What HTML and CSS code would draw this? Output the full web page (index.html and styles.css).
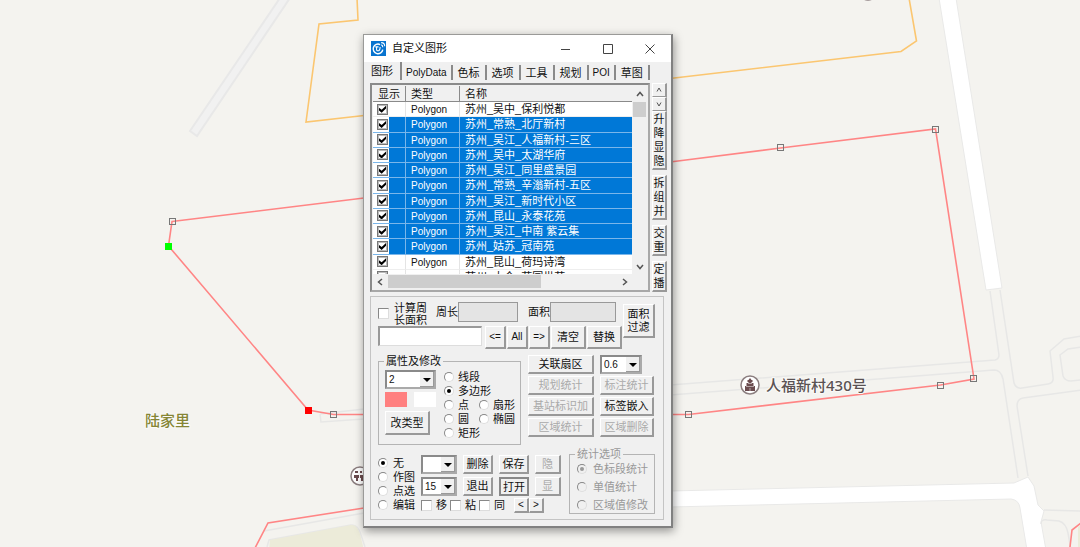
FILE: index.html
```html
<!DOCTYPE html>
<html lang="zh-CN">
<head>
<meta charset="utf-8">
<title>自定义图形</title>
<link rel="stylesheet" href="styles.css">
</head>
<body>
<main class="desktop">
  <svg class="map" viewBox="0 0 1080 547" preserveAspectRatio="xMidYMid slice" role="img" aria-label="地图">
    <path class="path-road" d="M282 -5 L190 131 L197 136 L292 -5"/>
    <path class="road" d="M939 -2 L986 290 L1002 288 L956 -2 Z"/>
    <path class="lane" d="M990 291 L999 355 Q999 359 995 360 L670 385 M670 395 L994 370 Q1001 370 1003 379 L1018 478"/>
    <path class="lane" d="M1000 290 L1014 383 Q1016 389 1022 388 L1048 384 Q1054 383 1053 377 L1050 351 L1064 339 L1081 336 M1081 347 L1068 349 L1060 355 L1063 376 Q1065 381 1071 381 L1081 380 M1081 390 L1023 398 Q1017 399 1017 406 L1028 476"/>
    <path class="lane" d="M320 414 L364 409 M320 414 L321 422 L364 419"/>
    <path class="road" d="M670 491 L1014 483 L1028 477 L1034 486 L1038 505 L1044 511 L1041 522 L1046 550 L1027 550 L1020 508 Q1019 500 1011 499 L670 507 Z"/>
    <path class="lane" d="M1044 510 L1081 511 M1041 524 Q1041 519 1047 520 L1059 521 Q1066 523 1068 533 L1071 550"/>
    <path class="lane" d="M264 531 L364 513 M267 547 L269 540 L351 525 Q358 524 361 535 L365 547"/>
    <path class="park" d="M269 550 L270 540 L351 525 Q357 524 360 534 L364 550 Z M1081 525 L1078 527 L1078 550 L1081 550 Z"/>
    <path class="zone-orange" d="M357 -2 L358 20 L319 24 L306 122 L364 115.5 M670 78.500 L901 51.500 L916.500 41 L909 -2"/>
    <path class="zone-red" d="M172 221.500 L364 198 L670 162 L780.500 148 L935.500 129 L974 379 L940.500 385 L688.500 414.500 L333.500 414.500 L308 410 L168.500 246 Z"/>
    <path class="zone-red" d="M254 550 L268 523 L364 508 M1081 523 L1072 530 L1070 547"/>
    <g class="node">
      <rect x="169.500" y="218.500" width="6" height="6"/>
      <rect x="330.500" y="411.500" width="6" height="6"/>
      <rect x="777.500" y="144.500" width="6" height="6"/>
      <rect x="932.500" y="126.500" width="6" height="6"/>
      <rect x="970.500" y="375.500" width="6" height="6"/>
      <rect x="937.500" y="382.500" width="6" height="6"/>
      <rect x="685.500" y="411.500" width="6" height="6"/>
    </g>
    <rect class="node-end" x="165" y="243" width="7" height="7"/>
    <rect class="node-start" x="305" y="407" width="7" height="7"/>
    <circle class="pin-disc" cx="868" cy="-9" r="9"/>
    <g>
      <circle class="pin-disc" cx="750" cy="385" r="9"/>
      <path class="pin-glyph" d="M750 378 l1.500 2 h1 v2 h-1 v1 h2 v3 h1.500 v5 h-10 v-5 h1.500 v-3 h2 v-1 h-1 v-2 h1z"/>
      <path class="pin-cut" d="M746 386.500 h8 M748 383.500 h4 M750 388 v3"/>
    </g>
    <g>
      <circle class="pin-disc" cx="360" cy="476" r="9"/>
      <path class="pin-glyph" d="M355 471h3v2h-3z M360 471h2v2h-2z M354 475h5v3h-1v3h-2v-3h-2z M360 475h4v6h-3v-3h-1z"/>
    </g>
    <text class="village" x="145" y="426">陆家里</text>
    <text class="address" x="766" y="391">人福新村430号</text>
  </svg>

  <section class="window" aria-label="自定义图形">
    <header class="titlebar">
      <svg class="app-icon" viewBox="0 0 14 14" aria-hidden="true">
        <rect width="14" height="14" fill="#0874cf"/>
        <path d="M8.500 3.300 A4.500 4.500 0 1 0 11 8" fill="none" stroke="#fff" stroke-width="1.300"/>
        <path d="M4 5.500 H7 M5.200 5.500 V8 Q5.500 9.600 7.200 9 Q8.500 8.500 8.500 5.500 M9.500 3.500 Q11 4 11 5.800 M9.500 1.500 Q12.800 1.500 12.800 5" fill="none" stroke="#fff" stroke-width="1"/>
      </svg>
      <h1>自定义图形</h1>
      <div class="window-buttons">
        <button type="button" aria-label="最小化"><svg viewBox="0 0 10 10"><path d="M0 5.500H9"/></svg></button>
        <button type="button" aria-label="最大化"><svg viewBox="0 0 10 10"><path d="M.5 .5H9.500V9.500H.5Z"/></svg></button>
        <button type="button" aria-label="关闭"><svg viewBox="0 0 10 10"><path d="M.5 .5L9.500 9.500M9.500 .5L.5 9.500"/></svg></button>
      </div>
    </header>

    <nav class="tabs">
      <button type="button" class="active">图形</button><button type="button" class="latin">PolyData</button><button type="button">色标</button><button type="button">选项</button><button type="button">工具</button><button type="button">规划</button><button type="button" class="latin">POI</button><button type="button">草图</button>
    </nav>

    <div class="list-area">
      <div class="listbox">
        <div class="viewport">
          <table>
            <thead><tr><th class="c-show">显示</th><th class="c-type">类型</th><th>名称</th></tr></thead>
            <tbody>
              <tr><td><input type="checkbox" checked aria-label="显示 保利悦都"></td><td>Polygon</td><td>苏州_吴中_保利悦都</td></tr>
              <tr class="sel"><td><input type="checkbox" checked aria-label="显示 北厅新村"></td><td>Polygon</td><td>苏州_常熟_北厅新村</td></tr>
              <tr class="sel"><td><input type="checkbox" checked aria-label="显示 人福新村"></td><td>Polygon</td><td>苏州_吴江_人福新村-三区</td></tr>
              <tr class="sel"><td><input type="checkbox" checked aria-label="显示 太湖华府"></td><td>Polygon</td><td>苏州_吴中_太湖华府</td></tr>
              <tr class="sel"><td><input type="checkbox" checked aria-label="显示 同里盛景园"></td><td>Polygon</td><td>苏州_吴江_同里盛景园</td></tr>
              <tr class="sel"><td><input type="checkbox" checked aria-label="显示 辛滃新村"></td><td>Polygon</td><td>苏州_常熟_辛滃新村-五区</td></tr>
              <tr class="sel"><td><input type="checkbox" checked aria-label="显示 新时代小区"></td><td>Polygon</td><td>苏州_吴江_新时代小区</td></tr>
              <tr class="sel"><td><input type="checkbox" checked aria-label="显示 永泰花苑"></td><td>Polygon</td><td>苏州_昆山_永泰花苑</td></tr>
              <tr class="sel"><td><input type="checkbox" checked aria-label="显示 中南 紫云集"></td><td>Polygon</td><td>苏州_吴江_中南 紫云集</td></tr>
              <tr class="sel"><td><input type="checkbox" checked aria-label="显示 冠南苑"></td><td>Polygon</td><td>苏州_姑苏_冠南苑</td></tr>
              <tr><td><input type="checkbox" checked aria-label="显示 荷玛诗湾"></td><td>Polygon</td><td>苏州_昆山_荷玛诗湾</td></tr>
              <tr><td><input type="checkbox" checked aria-label="显示 花园世苑"></td><td></td><td>苏州_太仓_花园世苑</td></tr>
            </tbody>
          </table>
        </div>
        <div class="vscroll">
          <svg viewBox="0 0 8 6"><path d="M1 5L4 1.500L7 5"/></svg>
          <span class="thumb"></span>
          <svg viewBox="0 0 8 6"><path d="M1 1L4 4.500L7 1"/></svg>
        </div>
        <div class="hscroll">
          <svg viewBox="0 0 6 8"><path d="M5 1L1.500 4L5 7"/></svg>
          <span class="thumb"></span>
          <svg viewBox="0 0 6 8"><path d="M1 1L4.500 4L1 7"/></svg>
        </div>
      </div>
      <div class="side">
        <button type="button" class="step" aria-label="上移"><svg viewBox="0 0 6 6"><path d="M1 4.500L3 1L5 4.500"/></svg></button>
        <button type="button" class="step" aria-label="下移"><svg viewBox="0 0 6 6"><path d="M1 1.500L3 5L5 1.500"/></svg></button>
        <div class="group first"><button type="button">升</button><button type="button">降</button><button type="button">显</button><button type="button">隐</button></div>
        <div class="group"><button type="button">拆</button><button type="button">组</button><button type="button">并</button></div>
        <div class="group"><button type="button">交</button><button type="button">重</button></div>
        <div class="group"><button type="button">定</button><button type="button">播</button></div>
      </div>
    </div>

    <div class="panel">
      <div class="measure">
        <div class="measure-rows">
          <div class="measure-row">
            <label class="calc"><input type="checkbox"><span>计算周<br>长面积</span></label>
            <label class="field">周长<input type="text" class="readonly" readonly></label>
            <label class="field area">面积<input type="text" class="readonly" readonly></label>
          </div>
          <div class="search-row">
            <input type="text" class="search" aria-label="名称">
            <button type="button" class="btn latin">&lt;=</button>
            <button type="button" class="btn latin">All</button>
            <button type="button" class="btn latin">=&gt;</button>
            <button type="button" class="btn wide">清空</button>
            <button type="button" class="btn wide">替换</button>
          </div>
        </div>
        <button type="button" class="btn filter">面积<br>过滤</button>
      </div>

      <div class="middle">
        <fieldset class="props">
          <legend>属性及修改</legend>
          <div class="props-left">
            <span class="combo"><select aria-label="线宽"><option>2</option></select></span>
            <div class="swatches">
              <button type="button" class="swatch line" aria-label="线条颜色"></button>
              <button type="button" class="swatch fill" aria-label="填充颜色"></button>
            </div>
            <button type="button" class="btn retype">改类型</button>
          </div>
          <div class="shapes">
            <label class="full"><input type="radio" name="shape">线段</label>
            <label class="full"><input type="radio" name="shape" checked>多边形</label>
            <label><input type="radio" name="shape">点</label>
            <label><input type="radio" name="shape">扇形</label>
            <label><input type="radio" name="shape">圆</label>
            <label><input type="radio" name="shape">椭圆</label>
            <label class="full"><input type="radio" name="shape">矩形</label>
          </div>
        </fieldset>
        <div class="actions">
          <button type="button" class="btn">关联扇区</button>
          <span class="combo ratio"><select aria-label="透明度"><option>0.6</option></select></span>
          <button type="button" class="btn" disabled>规划统计</button>
          <button type="button" class="btn" disabled>标注统计</button>
          <button type="button" class="btn" disabled>基站标识加</button>
          <button type="button" class="btn">标签嵌入</button>
          <button type="button" class="btn" disabled>区域统计</button>
          <button type="button" class="btn" disabled>区域删除</button>
        </div>
      </div>

      <div class="bottom">
        <div class="modes">
          <label><input type="radio" name="mode" checked>无</label>
          <label><input type="radio" name="mode">作图</label>
          <label><input type="radio" name="mode">点选</label>
          <label><input type="radio" name="mode">编辑</label>
        </div>
        <div class="commands">
          <div class="command-grid">
            <span class="combo"><select aria-label="样式"><option></option></select></span>
            <button type="button" class="btn">删除</button>
            <button type="button" class="btn">保存</button>
            <button type="button" class="btn" disabled>隐</button>
            <span class="combo"><select aria-label="级别"><option>15</option></select></span>
            <button type="button" class="btn">退出</button>
            <button type="button" class="btn default">打开</button>
            <button type="button" class="btn" disabled>显</button>
          </div>
          <div class="edit-row">
            <label><input type="checkbox">移</label>
            <label><input type="checkbox">粘</label>
            <label><input type="checkbox">同</label>
            <div class="pager"><button type="button" class="btn latin">&lt;</button><button type="button" class="btn latin">&gt;</button></div>
          </div>
        </div>
        <fieldset class="stats" disabled>
          <legend>统计选项</legend>
          <label><input type="radio" name="stat" checked>色标段统计</label>
          <label><input type="radio" name="stat">单值统计</label>
          <label><input type="radio" name="stat">区域值修改</label>
        </fieldset>
      </div>
    </div>
  </section>
</main>
</body>
</html>
```
FILE: styles.css
```css
* { box-sizing: border-box; }

body {
  margin: 0;
  font-family: "Liberation Sans", "Noto Sans CJK SC", sans-serif;
  font-size: 11px;
  line-height: 14px;
  color: #111;
}

button, input, select { font: inherit; color: inherit; margin: 0; padding: 0; }

/* Map canvas */
.desktop { position: relative; height: 100vh; overflow: hidden; background: #f4f3ef; }
.map { display: block; width: 100%; height: 100%; }
.path-road { fill: #f1f1f1; stroke: #e8e8e8; stroke-width: 2; }
.road { fill: #fff; stroke: #e9e9e8; stroke-width: 1; }
.lane { fill: none; stroke: #e7e7e6; stroke-width: 1.500; }
.park { fill: #ecebd9; }
.zone-orange { fill: none; stroke: #fbc670; stroke-width: 1.600; }
.zone-red { fill: none; stroke: #ff8585; stroke-width: 1.600; }
.node rect { fill: none; stroke: #777; stroke-width: 1; }
.node-end { fill: #0f0; }
.node-start { fill: #f00; }
.pin-disc { fill: #fff; stroke: #8c7f80; stroke-width: 1.500; }
.pin-glyph { fill: #6b4c4f; }
.pin-cut { fill: none; stroke: #fff; stroke-width: .5; }
.map text { font-size: 15px; paint-order: stroke; stroke: #fafaf8; stroke-width: 2px; font-weight: 500; }
.village { fill: #858535; }
.address { fill: #5a5253; font-family: "Noto Sans", "Noto Sans CJK SC", sans-serif; }

/* Tool window */
.window {
  position: absolute;
  left: 363px;
  top: 34px;
  width: 310px;
  padding-bottom: 6px;
  background: #f0f0f0;
  border: 1px solid #9a9a98;
  border-right: 2px solid #808080;
  border-bottom: 2px solid #808080;
  box-shadow: 1px 3px 9px rgba(0, 0, 0, .4);
}
.titlebar { display: flex; align-items: center; height: 27px; padding-left: 7px; background: #fff; }
.app-icon { width: 15px; height: 15px; }
.titlebar h1 { flex: 1; margin: 0 0 0 6px; font-size: 11px; font-weight: 400; line-height: 13px; }
.window-buttons { display: flex; }
.window-buttons button { display: grid; place-items: center; width: 42px; height: 26px; border: 0; background: none; }
.window-buttons svg { width: 10px; height: 10px; fill: none; stroke: #444; }

.tabs { display: flex; align-items: flex-end; height: 18px; padding-left: 6px; }
.tabs button {
  height: 15px;
  padding: 0 5px;
  border: 0;
  border-right: 2px solid #8a8a8a;
  background: none;
  white-space: nowrap;
}
.tabs .active { height: 18px; padding: 0 7px 1px 1px; }
.latin, .tabs .latin { font-size: 10px; }
.tabs .latin { padding: 0 4px; }

/* Shape list */
.list-area { display: flex; gap: 2px; padding: 3px 4px 0 6px; }
.listbox {
  flex: 1;
  display: grid;
  grid-template-columns: 1fr 15px;
  grid-template-rows: 188px 15px;
  border: 2px solid #8a8a8a;
  border-right-color: #a8a8a8;
  border-bottom-color: #a8a8a8;
  padding: 1px;
}
.viewport { overflow: hidden; background: #fff; }
table { width: 100%; height: 199px; border-collapse: separate; border-spacing: 0; table-layout: fixed; }
th {
  height: 16px;
  padding: 0 0 0 5px;
  text-align: left;
  font-weight: 400;
  line-height: 14px;
  background: #f0f0f0;
  border-right: 1px solid #8a8a8a;
  border-bottom: 1px solid #8a8a8a;
}
th:last-child { border-right: 0; }
.c-show { width: 33px; }
.c-type { width: 54px; }
td {
  padding: 1px 0 0 5px;
  line-height: 13px;
  white-space: nowrap;
  border-right: 1px solid #e4e4e4;
  border-bottom: 1px solid #eee;
}
td:first-child { padding: 0 0 0 4px; }
td:nth-child(2) { font-size: 10px; }
td:last-child { border-right: 0; }
.sel td { background: #0078d7; color: #fff; border-color: #7ab6ea; }
.sel td:first-child { background: linear-gradient(to right, #fff 16px, #0078d7 16px); }
td input[type="checkbox"] { border: 1px solid #777; box-shadow: inset 0 0 0 1px #bbb; }
.vscroll, .hscroll { display: flex; align-items: center; background: #f0f0f0; }
.vscroll { flex-direction: column; padding: 5px 0 4px; gap: 5px; }
.vscroll .thumb { width: 13px; height: 15px; background: #cdcdcd; }
.vscroll svg:last-child { margin-top: auto; }
.vscroll svg { width: 8px; height: 6px; }
.hscroll { padding: 0 4px; gap: 5px; }
.hscroll .thumb { width: 153px; height: 13px; background: #cdcdcd; }
.hscroll svg:last-child { margin-left: auto; }
.hscroll svg { width: 6px; height: 8px; }
.vscroll path, .hscroll path { fill: none; stroke: #555; stroke-width: 1.500; }

/* Side buttons */
.side { display: flex; flex-direction: column; width: 15px; }
.step, .group { border: 1px solid #fff; border-right: 2px solid #999; border-bottom: 1px solid #999; background: #f0f0f0; }
.step { display: grid; place-items: center; height: 14px; }
.step svg { width: 6px; height: 6px; fill: none; stroke: #555; }
.group { display: flex; flex-direction: column; margin-top: 5px; border-bottom-width: 2px; }
.group.first { margin-top: 0; }
.group button { height: 14px; border: 0; background: none; line-height: 14px; }

/* Form controls */
.btn {
  background: #f0f0f0;
  border: 1px solid #fff;
  border-right: 2px solid #999;
  border-bottom: 2px solid #999;
  line-height: 14px;
  white-space: nowrap;
}
.btn:disabled { color: #aaa; }
.btn.default { border: 2px solid #888; }
label { display: flex; align-items: center; white-space: nowrap; }
input[type="radio"], input[type="checkbox"] { appearance: none; flex: none; background: #fff; display: grid; place-items: center; }
input[type="radio"] { width: 10px; height: 10px; border: 1px solid; border-color: #888 #ddd #ddd #888; border-radius: 50%; }
input[type="radio"]:checked::before { content: ""; width: 4px; height: 4px; border-radius: 50%; background: #000; }
input[type="radio"]:disabled { background: #f0f0f0; }
input[type="radio"]:disabled:checked::before { background: #999; }
input[type="checkbox"] { width: 11px; height: 11px; border: 1px solid; border-color: #888 #ddd #ddd #888; }
input[type="checkbox"]:checked::before {
  content: "";
  width: 7px;
  height: 7px;
  background: #000;
  clip-path: polygon(0 30%, 38% 60%, 100% 0, 100% 40%, 38% 100%, 0 70%);
}
input[type="text"] { min-width: 0; background: #fff; border: 2px solid #999; border-right: 1px solid #ddd; border-bottom: 1px solid #ddd; }
input.readonly { background: #e4e4e4; border: 1px solid #999; height: 20px; }
.combo { position: relative; display: block; height: 19px; }
.combo select {
  appearance: none;
  display: block;
  width: 100%;
  height: 100%;
  padding-left: 2px;
  font-size: 10px;
  line-height: 14px;
  border: 2px solid #8a8a8a;
  border-right-color: #aaa;
  border-bottom-color: #aaa;
  border-radius: 0;
  background: #fff;
}
.combo::before, .combo::after { content: ""; position: absolute; pointer-events: none; }
.combo::before { top: 2px; right: 2px; bottom: 2px; width: 13px; background: #f0f0f0; border-right: 1px solid #999; border-bottom: 1px solid #999; }
.combo::after { top: 8px; right: 5px; border: 4px solid transparent; border-top-color: #000; border-bottom: 0; }

/* Lower panel */
.panel { margin: 4px 7px 0 6px; padding: 4px 8px 5px 7px; border: 1px solid #c4c4c4; }
.measure { display: flex; justify-content: space-between; }
.measure-row { display: flex; height: 25px; }
.calc { gap: 5px; line-height: 12px; }
.field { align-self: flex-start; height: 22px; margin-left: 9px; }
.field .readonly { width: 60px; }
.field.area { margin-left: 10px; }
.field.area .readonly { width: 66px; }
.search-row { display: flex; gap: 1px; height: 23px; }
.search { width: 104px; height: 20px; margin-right: 2px; }
.search-row .btn { width: 21px; }
.search-row .wide { width: 35px; }
.filter { width: 32px; height: 34px; margin-top: 3px; line-height: 13px; }

fieldset { position: relative; min-width: 0; margin: 0; border: 1px solid #b4b4b4; }
legend { padding: 0 2px; line-height: 12px; }
.middle { display: flex; gap: 7px; margin-top: 6px; }
.props { display: flex; gap: 8px; width: 143px; height: 90px; padding: 3px 0 0 6px; }
.props legend { margin-left: -1px; }
.props-left { width: 51px; }
.swatches { display: flex; gap: 7px; margin: 3px 0 4px; }
.swatch { width: 22px; height: 15px; border: 0; }
.swatch.line { background: #ff8080; }
.swatch.fill { background: #fff; }
.retype { width: 45px; height: 24px; }
.shapes { display: grid; grid-template-columns: 35px 1fr; grid-auto-rows: 14px; align-content: start; }
.shapes label { gap: 4px; }
.shapes .full { grid-column: 1 / -1; }
.actions { display: grid; grid-template-columns: 66px 54px; grid-auto-rows: 19px; gap: 2px 6px; align-content: start; }
.ratio { width: 42px; }

.bottom { display: flex; margin-top: 3px; }
.modes { width: 43px; padding-top: 8px; }
.modes label { gap: 5px; height: 14px; }
.commands { padding-top: 7px; }
.command-grid { display: grid; grid-template-columns: 36px 30px 30px 26px; grid-auto-rows: 19px; gap: 3px 6px; }
.edit-row { display: flex; align-items: center; gap: 2px; height: 18px; }
.edit-row label { gap: 4px; width: 27px; }
.pager { display: flex; margin-left: 6px; }
.pager .btn { width: 15px; height: 15px; line-height: 11px; }
.stats { width: 86px; height: 66px; margin-left: 8px; padding: 0 0 0 7px; color: #999; }
.stats legend { margin-left: -2px; }
.stats label { gap: 6px; height: 18px; }
```
